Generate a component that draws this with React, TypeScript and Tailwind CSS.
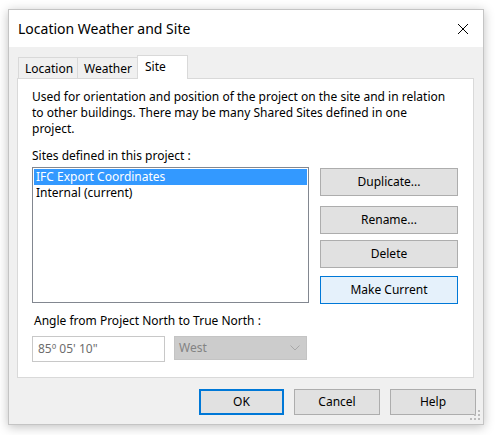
import { useState } from "react";

const font = { fontFamily: '"Noto Sans", "Segoe UI", sans-serif' };

const tabs = [
  { label: "Location", w: "w-[60px]" },
  { label: "Weather", w: "w-[61px]" },
  { label: "Site", w: "w-[51px]" },
];

function Tab({ label, w, active, onClick }: { label: string; w: string; active?: boolean; onClick: () => void }) {
  if (active) {
    return (
      <button
        onClick={onClick}
        className={
          "relative z-10 -mb-px -ml-px flex h-[24px] items-start border border-b-0 border-[#d9d9d9] bg-white pl-[7px] pt-[2px] text-[12px] text-black " +
          w
        }
      >
        {label}
      </button>
    );
  }
  return (
    <button
      onClick={onClick}
      className={
        "-ml-px flex h-[21px] items-center border border-b-0 border-[#d9d9d9] bg-[#f0f0f0] pl-[6px] pt-[1px] text-[12px] text-black first:ml-0 " +
        w
      }
    >
      {label}
    </button>
  );
}

function SideButton({ children, primary }: { children: React.ReactNode; primary?: boolean }) {
  return (
    <button
      className={
        "flex h-[28px] w-[138px] items-center justify-center border text-[12px] text-black " +
        (primary ? "border-[#0078d7] bg-[#e5f1fb]" : "border-[#adadad] bg-[#e1e1e1]")
      }
    >
      {children}
    </button>
  );
}

export default function App() {
  const [tab, setTab] = useState("Site");
  const [selected, setSelected] = useState(0);
  const sites = ["IFC Export Coordinates", "Internal (current)"];

  return (
    <div className="h-[435px] w-[495px] bg-white pl-[8px] pt-[9px]" style={font}>
      <div className="relative flex h-[416px] w-[476px] flex-col border border-[#c4c4c4] bg-[#f0f0f0] shadow-[0_2px_10px_rgba(0,0,0,0.25)]">
        {/* title bar */}
        <div className="flex h-[37px] shrink-0 items-center justify-between bg-white pl-[9px] pr-[12px]">
          <span className="text-[14px] text-black">Location Weather and Site</span>
          <svg width="12" height="12" viewBox="0 0 12 12" className="mr-[2px]">
            <path d="M1 1 L11 11 M11 1 L1 11" stroke="#000" strokeWidth="1" />
          </svg>
        </div>

        <div className="flex flex-1 flex-col pl-[8px] pr-[9px] pt-[8px]">
          {/* tabs */}
          <div className="flex h-[23px] items-end pl-[1px]">
            {tabs.map((t) => (
              <Tab key={t.label} label={t.label} w={t.w} active={tab === t.label} onClick={() => setTab(t.label)} />
            ))}
          </div>

          {/* panel */}
          <div className="flex h-[300px] flex-col border border-[#d9d9d9] bg-white pl-[14px] pr-[14px] pt-[10px]">
            <p className="w-[420px] text-[12px] leading-[16px] text-black">
              Used for orientation and position of the project on the site and in relation to other buildings. There may be many Shared Sites defined in one project.
            </p>
            <div className="mt-[11px] text-[12px] leading-[16px] text-black">Sites defined in this project :</div>
            <div className="mt-[3px] flex gap-[11px]">
              <div className="h-[136px] w-[277px] border border-[#828790] bg-white p-[1px]">
                {sites.map((s, i) => (
                  <div
                    key={s}
                    onClick={() => setSelected(i)}
                    className={
                      "h-[16px] pl-[2px] text-[12px] leading-[16px] " +
                      (selected === i ? "bg-[#3399ff] text-white" : "text-black")
                    }
                  >
                    {s}
                  </div>
                ))}
              </div>
              <div className="flex flex-col">
                <div className="mt-[1px]">
                  <SideButton>Duplicate...</SideButton>
                </div>
                <div className="mt-[10px]">
                  <SideButton>Rename...</SideButton>
                </div>
                <div className="mt-[6px]">
                  <SideButton>Delete</SideButton>
                </div>
                <div className="mt-[8px]">
                  <SideButton primary>Make Current</SideButton>
                </div>
              </div>
            </div>
            <div className="mt-[9px] pl-[2px] text-[12px] leading-[16px] text-black">Angle from Project North to True North :</div>
            <div className="mt-[7px] flex gap-[9px]">
              <div className="flex h-[26px] w-[133px] items-center border border-[#c8c8c8] bg-white pl-[5px] text-[12px] text-[#6d6d6d]">
                85º 05' 10"
              </div>
              <div className="flex h-[24px] w-[133px] items-center justify-between border border-[#c4c4c4] bg-[#cccccc] pl-[4px] pr-[6px] text-[12px] text-[#838383]">
                <span>West</span>
                <svg width="10" height="6" viewBox="0 0 10 6">
                  <path d="M0.5 0.5 L5 5 L9.5 0.5" fill="none" stroke="#a8a8a8" strokeWidth="1" />
                </svg>
              </div>
            </div>
          </div>

          {/* bottom buttons */}
          <div className="-mr-[2px] mt-[11px] flex justify-end gap-[10px]">
            <button className="flex h-[26px] w-[85px] items-center justify-center border-2 border-[#0078d7] bg-[#e1e1e1] text-[12px] text-black">
              OK
            </button>
            <button className="flex h-[26px] w-[86px] items-center justify-center border border-[#adadad] bg-[#e1e1e1] text-[12px] text-black">
              Cancel
            </button>
            <button className="flex h-[26px] w-[86px] items-center justify-center border border-[#adadad] bg-[#e1e1e1] text-[12px] text-black">
              Help
            </button>
          </div>
        </div>

        {/* resize grip */}
        <svg width="12" height="12" viewBox="0 0 12 12" className="absolute bottom-[3px] right-[2px]">
          {[
            [9, 1],
            [5, 5],
            [9, 5],
            [1, 9],
            [5, 9],
            [9, 9],
          ].map(([x, y]) => (
            <rect key={`${x}-${y}`} x={x} y={y} width="2" height="2" fill="#bcbcbc" />
          ))}
        </svg>
      </div>
    </div>
  );
}
